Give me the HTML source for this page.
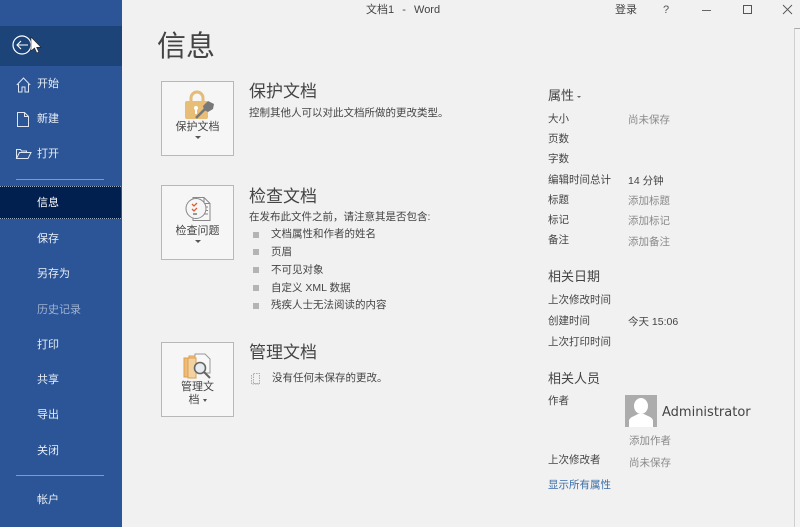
<!DOCTYPE html>
<html><head><meta charset="utf-8">
<style>
html,body{margin:0;padding:0;width:800px;height:527px;overflow:hidden;background:#f1f1f1}
body{position:relative;font-family:"Liberation Sans","Noto Sans CJK SC",sans-serif;color:#444;font-size:10.5px}
.t{position:absolute;white-space:nowrap;line-height:14px}
#side{position:absolute;left:0;top:0;width:122px;height:527px;background:#2b5597}
#side .n{position:absolute;left:37px;color:#e8edf5;font-size:11px;line-height:14px;white-space:nowrap}
.sep{position:absolute;left:16px;width:88px;height:1px;background:#7f9cc6}
.btn{position:absolute;left:161px;width:71px;background:#f6f6f6;border:1px solid #b8b8b8;text-align:center;font-size:11px;color:#444}
.h{position:absolute;font-size:17px;line-height:20px;color:#444;white-space:nowrap}
.lab{position:absolute;left:548px;font-size:10.5px;line-height:14px;color:#444;white-space:nowrap}
.val{position:absolute;left:628px;font-size:10.5px;line-height:14px;color:#8a8a8a;white-space:nowrap}
.sq{position:absolute;left:253px;width:6px;height:6px;background:#b4b4b4}
.li{position:absolute;left:271px;font-size:10.5px;line-height:14px;color:#444;white-space:nowrap}
.ar{position:absolute;left:33px;top:54px;border:3px solid transparent;border-top:3px solid #555;border-bottom:0}
svg{position:absolute;overflow:visible}
</style></head><body>
<div id="side">
<div style="position:absolute;left:0;top:26px;width:122px;height:40px;background:#1d4478"></div>
<svg style="left:0;top:26px" width="50" height="40" viewBox="0 0 50 40"><circle cx="22" cy="19" r="9" fill="none" stroke="#fff" stroke-width="1.2"/><path d="M17 19H28M21 15l-4 4 4 4" fill="none" stroke="#fff" stroke-width="1.1"/><path d="M31 11v14l3.500-3 2.300 5 2-1-2.200-4.700h4.400z" fill="#fff" stroke="#222" stroke-width=".6"/></svg>
<svg style="left:16px;top:77px" width="16" height="16" viewBox="0 0 16 16"><path d="M.8 8 7.500 1 14.200 8M2.500 7v8h3.500v-5h3v5h3.500V7" fill="none" stroke="#dfe6f1" stroke-width="1"/></svg>
<div class="n" style="top:77px">开始</div>
<svg style="left:17px;top:112px" width="13" height="15" viewBox="0 0 13 15"><path d="M.5.500h7l4 4v10H.5zM7.500.500v4h4" fill="none" stroke="#dfe6f1"/></svg>
<div class="n" style="top:112px">新建</div>
<svg style="left:16px;top:148px" width="16" height="12" viewBox="0 0 16 12"><path d="M.5 10.500V1.500h4l1 1.500h5v1.500M.5 10.500 3.500 4.500h11.500l-3 6z" fill="none" stroke="#dfe6f1"/></svg>
<div class="n" style="top:147px">打开</div>
<div class="sep" style="top:179px"></div>
<div style="position:absolute;left:0;top:186px;width:121px;height:33px;background:#02204f;border-top:1px dotted #9aa9c2;border-bottom:1px dotted #9aa9c2;box-sizing:border-box"></div>
<div class="n" style="top:196px;color:#fff">信息</div>
<div class="n" style="top:232px">保存</div>
<div class="n" style="top:267px">另存为</div>
<div class="n" style="top:303px;color:#a0b2d0">历史记录</div>
<div class="n" style="top:338px">打印</div>
<div class="n" style="top:373px">共享</div>
<div class="n" style="top:408px">导出</div>
<div class="n" style="top:444px">关闭</div>
<div class="sep" style="top:475px"></div>
<div class="n" style="top:493px">帐户</div>
</div>

<div class="t" style="left:366px;top:3px;font-size:11px;color:#444;word-spacing:1px">文档1 &nbsp;- &nbsp;Word</div>
<div class="t" style="left:615px;top:3px;font-size:11px;color:#444">登录</div>
<div class="t" style="left:663px;top:3px;font-size:11px;color:#555">?</div>
<svg style="left:700px;top:0" width="100" height="20" viewBox="0 0 100 20"><path d="M2 10.500h9" stroke="#666" stroke-width="1"/><rect x="43.500" y="5.500" width="8" height="8" fill="none" stroke="#555"/><path d="M83 5l9 9M92 5l-9 9" stroke="#555" stroke-width=".9"/></svg>
<div style="position:absolute;left:794px;top:28px;width:6px;height:499px;background:#f4f4f4;border-left:1px solid #d0d0d0;border-top:1px solid #aaa;box-sizing:border-box"></div>

<div class="t" style="left:157px;top:28px;font-size:29px;line-height:38px;color:#444">信息</div>

<div class="btn" style="top:81px;height:73px"><div style="position:absolute;left:0;right:0;top:38px;line-height:14px">保护文档</div><div class="ar"></div></div>
<svg style="left:185px;top:91px" width="32" height="30" viewBox="0 0 32 30"><path d="M6 11V7a6 6 0 0 1 12 0v4" fill="none" stroke="#e5bb79" stroke-width="3"/><rect x="0" y="10" width="23" height="18" rx="2" fill="#e8bd75"/><circle cx="11" cy="17" r="2" fill="#fff"/><rect x="10" y="18" width="2" height="5" fill="#fff"/><path d="M11 27l9-9" stroke="#777" stroke-width="2.500"/><path d="M18 15l5-5 6 3-1 5-5 3-4-2z" fill="#787878"/></svg>
<div class="h" style="left:249px;top:82px">保护文档</div>
<div class="t" style="left:249px;top:106px">控制其他人可以对此文档所做的更改类型。</div>

<div class="btn" style="top:185px;height:73px"><div style="position:absolute;left:0;right:0;top:38px;line-height:14px">检查问题</div><div class="ar"></div></div>
<svg style="left:185px;top:196px" width="28" height="28" viewBox="0 0 28 28"><path d="M8 1.500h11l6 6v17H8z" fill="#f8f8f8" stroke="#888"/><path d="M19 1.500v6h6M19 11h4M19 14.500h4M19 18h4" fill="none" stroke="#888"/><circle cx="11" cy="12.500" r="10" fill="#f6f6f6" stroke="#888"/><path d="M7 8l2 2 3-3M7 13l2 2 3-3" fill="none" stroke="#d5603a" stroke-width="1.300"/><path d="M8 18h4" stroke="#999" stroke-width="2"/></svg>
<div class="h" style="left:249px;top:187px">检查文档</div>
<div class="t" style="left:249px;top:210px">在发布此文件之前，请注意其是否包含:</div>
<div class="sq" style="top:232px"></div><div class="li" style="top:227px">文档属性和作者的姓名</div>
<div class="sq" style="top:249px"></div><div class="li" style="top:245px">页眉</div>
<div class="sq" style="top:267px"></div><div class="li" style="top:263px">不可见对象</div>
<div class="sq" style="top:285px"></div><div class="li" style="top:281px">自定义 XML 数据</div>
<div class="sq" style="top:303px"></div><div class="li" style="top:298px">残疾人士无法阅读的内容</div>

<div class="btn" style="top:342px;height:73px"><div style="position:absolute;left:0;right:0;top:37px;line-height:14px">管理文</div><div style="position:absolute;left:0;right:0;top:50px;line-height:14px">档 <span style="display:inline-block;border:2.500px solid transparent;border-top:3px solid #555;border-bottom:0;vertical-align:middle"></span></div></div>
<svg style="left:183px;top:353px" width="30" height="28" viewBox="0 0 30 28"><path d="M12 1h10l5 5v14H12z" fill="#f8f8f8" stroke="#999"/><path d="M6 3h6v19H6z" fill="#f0c890" stroke="#dca050"/><path d="M1 5h7v19H1z" fill="#eebc78" stroke="#dca050"/><path d="M5 5h8v20H5z" fill="#f3d2a2" stroke="#dca050"/><circle cx="17" cy="15" r="5.500" fill="#e6ecf0" stroke="#666" stroke-width="1.600"/><path d="M21 19l6 6" stroke="#666" stroke-width="2"/></svg>
<div class="h" style="left:249px;top:343px">管理文档</div>
<svg style="left:250px;top:372px" width="13" height="13" viewBox="0 0 13 13"><path d="M3.500 1.500h6v10h-6zM1.500 3v9h8" fill="none" stroke="#aaa" stroke-dasharray="1.500 1"/></svg>
<div class="t" style="left:272px;top:371px">没有任何未保存的更改。</div>

<div class="t" style="left:548px;top:87px;font-size:13px;line-height:18px">属性 <span style="display:inline-block;border:2px solid transparent;border-top:2.500px solid #666;border-bottom:0;vertical-align:middle;margin-left:-1px"></span></div>
<div class="lab" style="top:112px">大小</div><div class="val" style="top:113px">尚未保存</div>
<div class="lab" style="top:132px">页数</div>
<div class="lab" style="top:152px">字数</div>
<div class="lab" style="top:173px">编辑时间总计</div><div class="val" style="top:174px;color:#444">14 分钟</div>
<div class="lab" style="top:193px">标题</div><div class="val" style="top:194px">添加标题</div>
<div class="lab" style="top:213px">标记</div><div class="val" style="top:214px">添加标记</div>
<div class="lab" style="top:233px">备注</div><div class="val" style="top:235px">添加备注</div>
<div class="t" style="left:548px;top:268px;font-size:13px;line-height:18px">相关日期</div>
<div class="lab" style="top:293px">上次修改时间</div>
<div class="lab" style="top:314px">创建时间</div><div class="val" style="top:315px;color:#444">今天 15:06</div>
<div class="lab" style="top:335px">上次打印时间</div>
<div class="t" style="left:548px;top:370px;font-size:13px;line-height:18px">相关人员</div>
<div class="lab" style="top:394px">作者</div>
<svg style="left:625px;top:395px" width="32" height="32" viewBox="0 0 32 32"><rect width="32" height="32" fill="#acacac"/><ellipse cx="16" cy="11" rx="7" ry="8" fill="#fff"/><path d="M4 32v-6c0-4 6-5 9-7h6c3 2 9 3 9 7v6z" fill="#fff"/></svg>
<div class="t" style="left:662px;top:405px;line-height:16px;font-family:'DejaVu Sans',sans-serif;font-size:13px;color:#444">Administrator</div>
<div class="val" style="top:434px;left:629px">添加作者</div>
<div class="lab" style="top:453px">上次修改者</div><div class="val" style="top:456px;left:629px">尚未保存</div>
<div class="lab" style="top:478px;color:#3a6ea8">显示所有属性</div>
</body></html>
